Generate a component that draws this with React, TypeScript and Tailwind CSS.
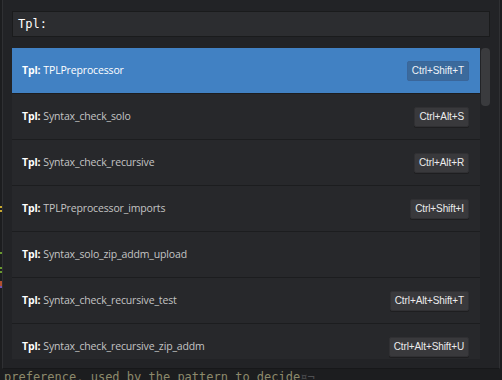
import React from "react";

const rows: { name: string; key?: string }[] = [
  { name: "TPLPreprocessor", key: "Ctrl+Shift+T" },
  { name: "Syntax_check_solo", key: "Ctrl+Alt+S" },
  { name: "Syntax_check_recursive", key: "Ctrl+Alt+R" },
  { name: "TPLPreprocessor_imports", key: "Ctrl+Shift+I" },
  { name: "Syntax_solo_zip_addm_upload" },
  { name: "Syntax_check_recursive_test", key: "Ctrl+Alt+Shift+T" },
  { name: "Syntax_check_recursive_zip_addm", key: "Ctrl+Alt+Shift+U" },
];

export default function App() {
  return (
    <div className="relative w-[502px] h-[380px] overflow-hidden bg-[#1c1d1f]">
      {/* gutter marks */}
      <div className="absolute left-0 top-[206px] w-[2px] h-[2px] bg-[#c8a830]" />
      <div className="absolute left-0 top-[210px] w-[2px] h-[2px] bg-[#c8a830]" />
      <div className="absolute left-0 top-[252px] w-[2px] h-[2px] bg-[#6a9a30]" />
      <div className="absolute left-0 top-[267px] w-[2px] h-[2px] bg-[#6a9a30]" />
      <div className="absolute left-0 top-[271px] w-[2px] h-[2px] bg-[#6a9a30]" />
      <div className="absolute left-0 top-[281px] w-[2px] h-[5px] bg-[#b05030]" />
      <div className="absolute left-0 top-[286px] w-[2px] h-[2px] bg-[#7050b0]" />

      <div className="ml-[2px] w-[498px] h-[369px] bg-[#222326] border-l border-r border-b border-[#2f3033] border-b-[#17181a] pl-[9px] pr-[9px] pt-[11px] flex flex-col">
        <div className="h-[26px] w-[478px] bg-[#2c2d30] border border-[#1a1b1c] flex items-center pl-[5px] text-white text-[12px] font-['DejaVu_Sans_Mono',monospace]">
          Tpl:
        </div>
        <div className="mt-[11px] flex gap-[1px] h-[311px]">
          <div className="w-[468px] h-[311px] overflow-hidden flex flex-col font-['Open_Sans',sans-serif] text-[10.5px] tracking-[-0.15px]">
            {rows.map((r, i) => {
              const sel = i === 0;
              return (
                <div
                  key={i}
                  className={
                    "shrink-0 h-[46px] border-b border-[#1c1d1f] flex items-center pl-[10px] pr-[11px] " +
                    (sel ? "bg-[#4181c3] text-white" : "bg-[#27282b] text-[#c4c4c4]")
                  }
                >
                  <span className="font-bold text-white mr-[3px]">Tpl:</span>
                  <span>{r.name}</span>
                  {r.key && (
                    <span
                      className={
                        "ml-auto h-[20px] px-[4px] flex items-center rounded-[2px] border text-[10px] tracking-[-0.1px] font-['Liberation_Sans',Arial,sans-serif] " +
                        (sel
                          ? "bg-[#3b6a9c] border-[#3a669a] text-[#eef2f7]"
                          : "bg-[#39393c] border-[#303033] text-[#ececec] shadow-[0_1px_0_#1e1e20]")
                      }
                    >
                      {r.key}
                    </span>
                  )}
                </div>
              );
            })}
          </div>
          <div className="w-[9px] h-[58px] rounded-[4px] bg-[#3a3b3e]" />
        </div>
      </div>
      <div className="pl-[4px] mt-[1px] whitespace-pre text-[12px] leading-[14px] text-[#8d8a6c] font-['DejaVu_Sans_Mono',monospace]">
        preference, used by the pattern to decide<span className="text-[#4e4f52]">¤¬</span>
      </div>
    </div>
  );
}
